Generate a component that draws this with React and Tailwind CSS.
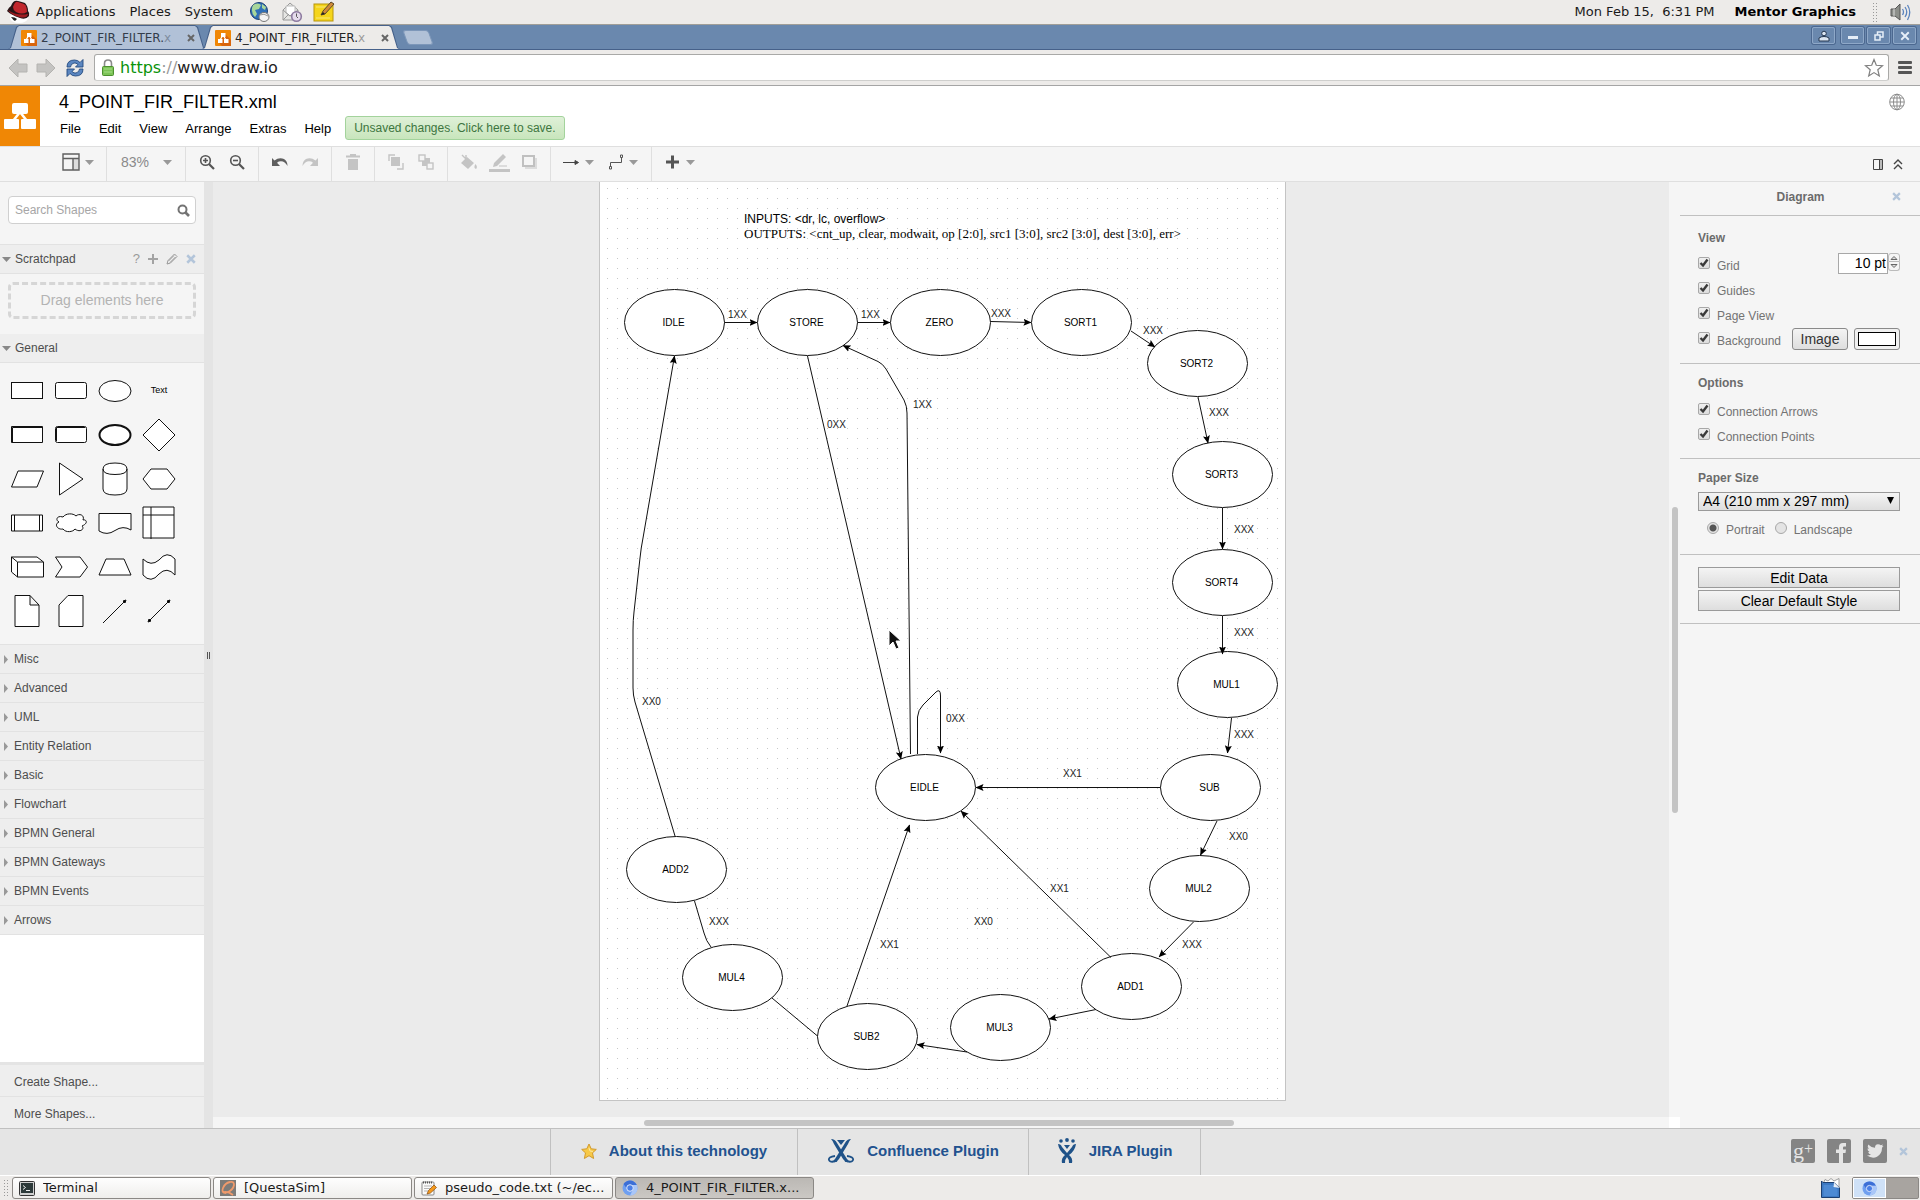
import React from "react";

const DEJAVU = "font-['DejaVu_Sans',sans-serif]";

/* ---------- desktop panel ---------- */

const HatIcon = () => (
  <svg width="24" height="24" viewBox="0 0 24 24">
    <ellipse cx="13" cy="17.500" rx="9" ry="5.500" fill="#fff" />
    <path d="M1 11Q3 7 5 6Q7 0 12 1Q16 2 19 3Q22 6 22 11Q24 13 23 16Q20 20 14 18Q5 15 1 11Z" fill="#2a1517" />
    <path d="M7 7Q9 1 12 2L18 4Q21 6 21 12Q16 15 10 12Q7 10 7 7Z" fill="#c1272d" />
    <path d="M2 10Q10 16 22 14Q21 19 13 17Q5 15 2 10Z" fill="#9e1c22" />
    <path d="M5 17Q9 17 11 19L9 21Q7 20 5 17Z" fill="#222" />
  </svg>
);

const GlobeMouseIcon = () => (
  <svg width="22" height="22" viewBox="0 0 22 22">
    <circle cx="10" cy="10" r="8.500" fill="#2f6fb8" stroke="#1b3f73" />
    <path d="M4 4Q9 1 12 4L10 8L6 9L8 13L6 16Q1 11 4 4Z" fill="#a8d69a" />
    <path d="M13 3L17 6L16 9L13 7Z" fill="#a8d69a" />
    <ellipse cx="15" cy="16" rx="5" ry="4.500" fill="#f4f4f4" stroke="#777" />
    <path d="M11 14Q15 12 19 15" stroke="#999" fill="none" />
  </svg>
);

const MailIcon = () => (
  <svg width="22" height="22" viewBox="0 0 22 22">
    <path d="M2 9L9 2L17 9V19H2Z" fill="#e6e6e4" stroke="#999" />
    <path d="M5 5H14V12L9 15L5 12Z" fill="#fff" stroke="#bbb" />
    <path d="M2 19L8 13M2 9L9 15L17 9" stroke="#999" fill="none" />
    <circle cx="15.500" cy="15.500" r="4.800" fill="#e5dcec" stroke="#8d7aa0" strokeWidth="1.600" />
    <path d="M15.500 12.500V15.500L17 17" stroke="#555" fill="none" />
  </svg>
);

const NoteIcon = () => (
  <svg width="22" height="22" viewBox="0 0 22 22">
    <rect x="1" y="3" width="19" height="17" fill="#f5d51c" stroke="#b8960c" />
    <path d="M3 6H17M3 17H17" stroke="#f9e878" />
    <path d="M8 14L10 10L18 1L21 3L12 13Z" fill="#d08a3a" stroke="#5d4a2a" />
    <path d="M8 14L10 11L12 13Z" fill="#222" />
  </svg>
);

const SpeakerIcon = () => (
  <svg width="22" height="22" viewBox="0 0 22 22" fill="none">
    <path d="M1 8H5L10 3V19L5 15H1Z" fill="#8d8f8a" stroke="#555" />
    <path d="M4 8V15" stroke="#ddd" />
    <path d="M12.500 8Q14.500 11 12.500 14M15 6Q18.500 11 15 16M17.500 4Q22 11 17.500 19" stroke="#5c84bd" strokeWidth="1.300" />
  </svg>
);

function DesktopPanel() {
  return (
    <header className={`${DEJAVU} flex h-[25px] shrink-0 items-center border-b border-[#a09e98] bg-[#edebe9] pl-[6px] pr-[8px] text-[13px] text-[#1a1a1a]`}>
      <HatIcon />
      <nav className="ml-[6px] flex items-center gap-[14px] pb-px">
        <button>Applications</button>
        <button>Places</button>
        <button>System</button>
      </nav>
      <div className="ml-[16px] flex items-center gap-[10px]">
        <button aria-label="Web browser"><GlobeMouseIcon /></button>
        <button aria-label="Mail"><MailIcon /></button>
        <button aria-label="Notes"><NoteIcon /></button>
      </div>
      <div className="ml-auto flex items-center gap-[20px] pb-px">
        <span className="whitespace-pre">Mon Feb 15,  6:31 PM</span>
        <b className="text-black">Mentor Graphics</b>
      </div>
      <span className="ml-[16px] mr-[12px] h-[20px] w-[6px] bg-[radial-gradient(#999_1px,transparent_1px)] bg-size-[3px_3px]" />
      <button aria-label="Volume"><SpeakerIcon /></button>
    </header>
  );
}

/* ---------- browser chrome ---------- */

const Favicon = () => (
  <svg width="16" height="16" viewBox="0 0 16 16" className="shrink-0">
    <rect width="16" height="16" rx="1" fill="#f08705" />
    <path d="M10 4L16 10V16H7L4 13Z" fill="#d9650c" />
    <path d="M8 5L5 10M8 5L11 10" stroke="#fff" strokeWidth="1.200" />
    <rect x="6" y="3" width="4.500" height="4" fill="#fff" />
    <rect x="3" y="9" width="4.500" height="4" fill="#fff" />
    <rect x="9" y="9" width="4.500" height="4" fill="#fff" />
  </svg>
);

const CrossIcon = ({ color, size = 8, width = 2 }) => (
  <svg width={size} height={size} viewBox="0 0 8 8" stroke={color} strokeWidth={width} className="shrink-0">
    <path d="M1 1L7 7M7 1L1 7" />
  </svg>
);

function Tab({ label, tail, active }) {
  return (
    <div className="-mr-[4px] h-[24px] w-[198px] bg-[#46618a] pt-px [clip-path:polygon(0_100%,2px_96%,8px_8%,11px_0,187px_0,190px_8%,196px_96%,100%_100%)]">
      <div
        className={
          (active ? "bg-[#edebe9] text-[#222]" : "bg-[#b1c1d7] text-[#333c4a]") +
          " flex h-full items-center pl-[13px] text-[12px] [clip-path:polygon(1px_100%,3px_96%,9px_8%,11px_0,187px_0,189px_8%,195px_96%,197px_100%)]"
        }
      >
        <Favicon />
        <span className="ml-[4px] whitespace-nowrap">
          {label}
          <span className="opacity-40">{tail}</span>
        </span>
        <button aria-label="Close tab" className="ml-auto mr-[11px]">
          <CrossIcon color="#666" />
        </button>
      </div>
    </div>
  );
}

function WindowButton({ label, children }) {
  return (
    <button
      aria-label={label}
      className="flex h-[17px] w-[23px] items-center justify-center rounded-[2px] border border-[#8ea8c8] shadow-[0_0_0_1px_#4c6890]"
    >
      {children}
    </button>
  );
}

function TabStrip() {
  return (
    <div className={`${DEJAVU} flex h-[25px] shrink-0 border-b border-[#46618a] bg-[#6a88ae] pl-[8px] pr-[4px]`}>
      <Tab label="2_POINT_FIR_FILTER." tail="x" />
      <Tab label="4_POINT_FIR_FILTER." tail="x" active />
      <button aria-label="New tab" className="ml-[9px] mt-[5px] h-[15px] w-[26px] skew-x-[20deg] rounded-[3px] border border-[#7d97b9] bg-[#b1c1d7]" />
      <div className="ml-auto flex gap-[3px] pt-[2px]">
        <div className="mr-[3px]">
          <WindowButton label="Profile">
            <svg width="12" height="12" viewBox="0 0 12 12" fill="#dce6f2" stroke="#24364f">
              <path d="M1 11V8Q3 6.500 6 6.500Q9 6.500 11 8V11Z" />
              <circle cx="6" cy="3.500" r="2.300" />
            </svg>
          </WindowButton>
        </div>
        <WindowButton label="Minimise">
          <span className="mt-[4px] h-[3px] w-[10px] bg-[#e6eef8]" />
        </WindowButton>
        <WindowButton label="Restore">
          <svg width="10" height="10" viewBox="0 0 10 10" fill="none" stroke="#e6eef8" strokeWidth="1.500">
            <path d="M3.500 1H9V6H3.500Z" />
            <path d="M1 4H6V9H1Z" fill="#6a88ae" />
          </svg>
        </WindowButton>
        <WindowButton label="Close">
          <CrossIcon color="#e6eef8" size={10} width={1.5} />
        </WindowButton>
      </div>
    </div>
  );
}

function NavArrow({ flip }) {
  return (
    <svg width="20" height="20" viewBox="0 0 20 20" className={flip ? "rotate-180" : ""}>
      <path d="M1 10L10 1V6H19V14H10V19Z" fill="#c4c3c1" stroke="#b4b3b0" />
    </svg>
  );
}

function AddressBar() {
  return (
    <div className={`${DEJAVU} flex h-[36px] shrink-0 items-center border-b border-[#a5a5a5] bg-[#edebe9] pl-[8px] pr-[8px]`}>
      <button aria-label="Back"><NavArrow /></button>
      <button aria-label="Forward" className="ml-[8px]"><NavArrow flip /></button>
      <button aria-label="Reload" className="ml-[9px]">
        <svg width="20" height="20" viewBox="0 0 20 20" fill="#5b86c0" stroke="#23497f" strokeWidth="0.900">
          <path d="M2 9Q2 2 9.500 2Q13 2 15 4.500L18 1.500V9H10.500L13 6.500Q11 4.500 9 5Q5.500 6 5.500 9Z" />
          <path d="M18 11Q18 18 10.500 18Q7 18 5 15.500L2 18.500V11H9.500L7 13.500Q9 15.500 11 15Q14.500 14 14.500 11Z" />
        </svg>
      </button>
      <div className="ml-[9px] flex h-[27px] flex-1 items-center rounded-[3px] border border-[#a9a9a7] border-b-[#cfcfcd] bg-white pl-[7px] pr-[4px] text-[16px]">
        <svg width="12" height="17" viewBox="0 0 12 17">
          <path d="M2.500 9V4.500Q2.500 1 6 1Q9.500 1 9.500 4.500V9" fill="none" stroke="#8a8a8a" strokeWidth="1.600" />
          <rect x="0.500" y="7.500" width="11" height="9" rx="1" fill="#7cc457" stroke="#4c8f2f" />
          <path d="M2 10H10M2 13H10" stroke="#a5dc88" />
        </svg>
        <span className="ml-[6px] text-[#0a930a]">https</span>
        <span className="text-[#999]">://</span>
        <input aria-label="Address" defaultValue="www.draw.io" className="h-full min-w-0 flex-1 text-[#222] outline-none" />
        <button aria-label="Bookmark this page">
          <svg width="20" height="20" viewBox="0 0 20 20" fill="#fff" stroke="#808080" strokeWidth="1.200">
            <path d="M10 1.500L12.300 7.300L18.500 7.700L13.800 11.700L15.300 18L10 14.600L4.700 18L6.200 11.700L1.500 7.700L7.700 7.300Z" />
          </svg>
        </button>
      </div>
      <button aria-label="Browser menu" className="ml-[9px] flex w-[14px] flex-col gap-[2px]">
        <span className="h-[3px] rounded-[1px] bg-[#555]" />
        <span className="h-[3px] rounded-[1px] bg-[#555]" />
        <span className="h-[3px] rounded-[1px] bg-[#555]" />
      </button>
    </div>
  );
}

/* ---------- application header ---------- */

function AppHeader() {
  return (
    <div className="flex h-[60px] shrink-0 bg-white">
      <div className="flex w-[40px] items-center justify-center bg-[#f08705]">
        <svg width="32" height="26" viewBox="0 0 32 26" fill="#fff">
          <path d="M16 9L9 18M16 9L23 18" stroke="#fff" strokeWidth="2.600" />
          <rect x="8" y="0" width="16" height="11" rx="2" />
          <rect x="0" y="16" width="15" height="10" rx="1" />
          <rect x="17" y="16" width="15" height="10" rx="1" />
        </svg>
      </div>
      <div className="flex flex-col pl-[19px]">
        <h1 className="mt-[4px] text-[18px] leading-[24px] text-black">4_POINT_FIR_FILTER.xml</h1>
        <div className="mt-[2px] flex items-center">
          <nav className="flex gap-[18px] pl-px pt-px text-[13px] text-black">
            <button>File</button>
            <button>Edit</button>
            <button>View</button>
            <button>Arrange</button>
            <button>Extras</button>
            <button>Help</button>
          </nav>
          <button className="ml-[14px] h-[24px] rounded-[3px] border border-[#a3d39c] bg-linear-to-b from-[#dff0d8] to-[#c8e5bc] px-[8px] text-[12px] text-[#3d7540]">
            Unsaved changes. Click here to save.
          </button>
        </div>
      </div>
      <button aria-label="Language" className="ml-auto mr-[15px] mt-[7px] h-[18px]">
        <svg width="16" height="18" viewBox="0 0 16 18" fill="none" stroke="#8c8c8c">
          <ellipse cx="8" cy="9" rx="7.300" ry="7.800" />
          <ellipse cx="8" cy="9" rx="3.500" ry="7.800" />
          <path d="M8 1V17M1 9H15M2 5H14M2 13H14" />
        </svg>
      </button>
    </div>
  );
}

/* ---------- toolbar ---------- */

const Caret = ({ color = "#999" }) => (
  <svg width="9" height="5" viewBox="0 0 9 5" fill={color}><path d="M0 0H9L4.500 5Z" /></svg>
);

function ToolGroup({ children, last }) {
  return (
    <div className={(last ? "" : "border-r border-[#dfdfdf]") + " flex items-center px-[6px] pb-[4px]"}>{children}</div>
  );
}

function ToolButton({ label, children, menu }) {
  return (
    <button
      aria-label={label}
      className={(menu ? "w-[44px] gap-[5px] pl-[6px]" : "w-[30px] justify-center") + " flex h-[30px] items-center"}
    >
      {children}
      {menu ? <Caret /> : null}
    </button>
  );
}

const Lens = ({ plus }) => (
  <svg width="16" height="16" viewBox="0 0 16 16" fill="none" stroke="#555" strokeWidth="1.600">
    <circle cx="6.500" cy="6.500" r="4.800" />
    <path d="M10 10L15 15" strokeWidth="2.200" />
    <path d={plus ? "M4 6.500H9M6.500 4V9" : "M4 6.500H9"} />
  </svg>
);

const TurnArrow = ({ color, flip }) => (
  <svg width="16" height="10" viewBox="0 0 16 10" className={flip ? "-scale-x-100" : ""}>
    <path d="M0 9V1L2.500 3.500Q7 0 12 2Q15.500 4 15.500 9Q13 4.500 9 4.300Q6.500 4.300 5 5.700L8 9Z" fill={color} />
  </svg>
);

function Toolbar() {
  const dim = "#c4c4c4";
  return (
    <div className="flex h-[36px] shrink-0 border-y border-[#dfdfdf] bg-[#f5f5f5] pl-[50px]">
      <ToolGroup>
        <ToolButton label="View" menu>
          <svg width="18" height="18" viewBox="0 0 18 18" fill="none" stroke="#5f5f5f" strokeWidth="1.400">
            <rect x="11" y="5.500" width="6" height="11" fill="#ddd" stroke="none" />
            <path d="M1 1H17V17H1ZM1 5.500H17M11 5.500V17" />
          </svg>
        </ToolButton>
      </ToolGroup>
      <ToolGroup>
        <button className="flex h-[30px] w-[66px] items-center justify-between pl-[8px] pr-[7px] text-[14px] text-[#8a8a8a]">
          83%
          <Caret />
        </button>
      </ToolGroup>
      <ToolGroup>
        <ToolButton label="Zoom in"><Lens plus /></ToolButton>
        <ToolButton label="Zoom out"><Lens /></ToolButton>
      </ToolGroup>
      <ToolGroup>
        <ToolButton label="Undo"><TurnArrow color="#5f5f5f" /></ToolButton>
        <ToolButton label="Redo"><TurnArrow color={dim} flip /></ToolButton>
      </ToolGroup>
      <ToolGroup>
        <ToolButton label="Delete">
          <svg width="14" height="16" viewBox="0 0 14 16" fill={dim}><path d="M0 1.500H4V0H10V1.500H14V3.500H0ZM2 5H12V16H2Z" /></svg>
        </ToolButton>
      </ToolGroup>
      <ToolGroup>
        <ToolButton label="To front">
          <svg width="16" height="16" viewBox="0 0 16 16" fill="none" stroke={dim}>
            <path d="M7 1H1V7M9 15H15V9" strokeWidth="1.400" />
            <rect x="3.500" y="3.500" width="8" height="8" fill={dim} />
          </svg>
        </ToolButton>
        <ToolButton label="To back">
          <svg width="16" height="16" viewBox="0 0 16 16" fill={dim} stroke={dim}>
            <rect x="4.500" y="4.500" width="7" height="7" />
            <rect x="1" y="1" width="6" height="6" fill="#f5f5f5" strokeWidth="1.400" />
            <rect x="9" y="9" width="6" height="6" fill="#f5f5f5" strokeWidth="1.400" />
          </svg>
        </ToolButton>
      </ToolGroup>
      <ToolGroup>
        <ToolButton label="Fill colour">
          <svg width="18" height="16" viewBox="0 0 18 16" fill={dim}>
            <path d="M7 3L14 9L8 15L1 9ZM15.500 10Q18 13 16 15Q13 14 15.500 10Z" />
            <path d="M2 1L7 6M6 4V1" stroke={dim} strokeWidth="1.400" />
          </svg>
        </ToolButton>
        <ToolButton label="Line colour">
          <svg width="21" height="19" viewBox="0 0 21 19" fill={dim}>
            <path d="M4 14L5 10L14 1L17 4L8 13ZM0 16H21V19H0ZM10 12.500H18V13.500H10Z" />
          </svg>
        </ToolButton>
        <ToolButton label="Shadow">
          <svg width="15" height="14" viewBox="0 0 15 14">
            <rect x="3" y="3" width="12" height="11" fill="#dcdcdc" />
            <rect x="1" y="1" width="11" height="10" fill="#f5f5f5" stroke="#c0c0c0" strokeWidth="2" />
          </svg>
        </ToolButton>
      </ToolGroup>
      <ToolGroup>
        <ToolButton label="Connection" menu>
          <svg width="17" height="16" viewBox="0 0 17 16" stroke="#444" fill="#444"><path d="M0 8.500H12" /><path d="M12 6.500L15.500 8.500L12 10.500Z" /></svg>
        </ToolButton>
        <ToolButton label="Waypoints" menu>
          <svg width="17" height="16" viewBox="0 0 17 16" fill="none" stroke="#555"><path d="M3.500 12V8.500H14.500V4M2.500 12.500H4.500V15H2.500ZM13.500 1H15.500V3.500H13.500Z" /></svg>
        </ToolButton>
      </ToolGroup>
      <ToolGroup last>
        <ToolButton label="Insert" menu>
          <svg width="17" height="14" viewBox="0 0 17 14" stroke="#555" strokeWidth="3"><path d="M2 7H15M8.500 0.500V13.500" /></svg>
        </ToolButton>
      </ToolGroup>
      <div className="ml-auto mr-[17px] flex items-center gap-[10px]">
        <button aria-label="Format panel">
          <svg width="10" height="11" viewBox="0 0 10 11" fill="none" stroke="#444"><rect x="7" y="1" width="2.500" height="9" fill="#bbb" stroke="none" /><path d="M0.500 0.500H9.500V10.500H0.500ZM6.500 0.500V10.500" /></svg>
        </button>
        <button aria-label="Collapse header">
          <svg width="10" height="11" viewBox="0 0 10 11" fill="none" stroke="#444" strokeWidth="1.400"><path d="M1 5L5 1L9 5M1 10L5 6L9 10" /></svg>
        </button>
      </div>
    </div>
  );
}

/* ---------- shapes sidebar ---------- */

const shapes = [
  ["Rectangle", <rect x="2.500" y="9.500" width="31" height="16" />],
  ["Rounded rectangle", <rect x="2.500" y="9.500" width="31" height="16" rx="2" />],
  ["Ellipse", <ellipse cx="18" cy="18" rx="16" ry="10.500" />],
  ["Text", null],
  ["Thick rectangle", <path d="M2.500 9.500H33.500V25.500H2.500ZM3.500 25V10.500H33" />],
  ["Thick rounded rectangle", <g><rect x="2.500" y="9.500" width="31" height="16" rx="2" /><path d="M3.500 24V10.500H32" /></g>],
  ["Thick ellipse", <ellipse cx="18" cy="18" rx="15.500" ry="10" strokeWidth="2" />],
  ["Diamond", <path d="M18 2L34 18L18 34L2 18Z" />],
  ["Parallelogram", <path d="M9 10H34.500L28 26H2.500Z" />],
  ["Triangle", <path d="M6.500 2L30 18L6.500 34Z" />],
  ["Cylinder", <path d="M6 8V28Q6 34 18 34Q30 34 30 28V8Q30 2 18 2Q6 2 6 8Q6 13.500 18 13.500Q30 13.500 30 8" />],
  ["Hexagon", <path d="M10 8H26L34 18L26 28H10L2 18Z" />],
  ["Process", <path d="M2.500 10H33.500V26H2.500ZM5.500 10V26M30.500 10V26" />],
  ["Cloud", <path d="M10 12C4 10 2 15 6 17C1 19 4 25 10 24C13 28 20 27 22 24C27 28 32 24 29 21C36 18 33 14 30 15C32 10 26 8 23 11C20 8 13 8 10 12Z" />],
  ["Document", <path d="M2 8.500H34V25Q26 20 18 25.500Q10 31 2 26Z" />],
  ["Internal storage", <path d="M2 2H33V33H2ZM10 2V34M2 10H33" />],
  ["Cube", <path d="M2.500 8H28L34.500 13V28H8.500L2.500 23ZM2.500 8L8.500 13V28M8.500 13H34.500" />],
  ["Step", <path d="M2.500 8H27L34.500 18L27 28H2.500L9 18Z" />],
  ["Trapezoid", <path d="M9 10H27L34 26H2Z" />],
  ["Tape", <path d="M2 10Q10 18 18 11Q26 1 34 10V26Q26 17 18 25Q10 35 2 26Z" />],
  ["Note", <path d="M6 2.500H21L30 12V33.500H6ZM21 2.500V12H30" />],
  ["Card", <path d="M15 2.500H30V33.500H6V12Z" />],
  ["Directional connector", <g><path d="M6 30L28 8" /><path d="M29 7L28 10L26 8Z" fill="#000" /></g>],
  ["Bidirectional connector", <g><path d="M8 28L28 8" /><path d="M29 7L28 10L26 8ZM7 29L8 26L10 28Z" fill="#000" /></g>],
];

const sections = ["Misc", "Advanced", "UML", "Entity Relation", "Basic", "Flowchart", "BPMN General", "BPMN Gateways", "BPMN Events", "Arrows"];

function Sidebar() {
  return (
    <aside className="flex w-[204px] shrink-0 flex-col bg-white text-[12px] text-[#4d4d4d]">
      <div className="bg-[#f5f5f5] px-[8px] pb-[20px] pt-[14px]">
        <div className="flex h-[28px] items-center rounded-[4px] border border-[#d0d0d0] bg-white pl-[6px] pr-[5px]">
          <input aria-label="Search shapes" placeholder="Search Shapes" className="h-full min-w-0 flex-1 outline-none placeholder:text-[#a6a6a6]" />
          <button aria-label="Search">
            <svg width="13" height="13" viewBox="0 0 13 13" fill="none" stroke="#737373" strokeWidth="2">
              <circle cx="5.500" cy="5.500" r="4" />
              <path d="M8.500 8.500L12 12" strokeWidth="2.600" />
            </svg>
          </button>
        </div>
      </div>
      <div className="flex h-[30px] items-center border-y border-[#e2e2e2] bg-[#eee] pl-[2px] pr-[8px]">
        <button className="flex items-center gap-[4px]"><Caret color="#888" />Scratchpad</button>
        <div className="ml-auto flex items-center gap-[8px] pb-px text-[#9a9a9a]">
          <button aria-label="Help" className="text-[13px]">?</button>
          <button aria-label="Add">
            <svg width="10" height="10" viewBox="0 0 10 10" stroke="#a3a3a3" strokeWidth="2"><path d="M0 5H10M5 0V10" /></svg>
          </button>
          <button aria-label="Edit">
            <svg width="12" height="12" viewBox="0 0 12 12" fill="none" stroke="#999"><path d="M1 11L2 7.500L8.500 1L11 3.500L4.500 10ZM2.500 8L8 2.500M4 9.500L9.500 4" /></svg>
          </button>
          <button aria-label="Close scratchpad"><CrossIcon color="#b3c5da" size={10} /></button>
        </div>
      </div>
      <div className="bg-[#f5f5f5] px-[8px] pb-[15px] pt-[8px]">
        <div className="flex h-[37px] items-center justify-center rounded-[5px] border-[3px] border-dashed border-[#d6d6d6] text-[14px] text-[#b3b3b3]">
          Drag elements here
        </div>
      </div>
      <button className="flex h-[29px] shrink-0 items-center gap-[4px] border-b border-[#e2e2e2] bg-[#eee] pl-[2px]">
        <Caret color="#888" />General
      </button>
      <div className="grid grid-cols-[repeat(4,44px)] bg-[#f5f5f5] pb-[11px] pl-[5px] pt-[6px]">
        {shapes.map(([name, art]) => (
          <button key={name} aria-label={name} className="flex h-[44px] items-center justify-center text-[9px] text-black">
            {art ? (
              <svg width="36" height="36" viewBox="0 0 36 36" fill="#fff" stroke="#111">{art}</svg>
            ) : (
              "Text"
            )}
          </button>
        ))}
      </div>
      <div className="border-t border-[#e2e2e2]">
        {sections.map((s) => (
          <button key={s} className="flex h-[29px] w-full items-center gap-[6px] border-b border-[#e2e2e2] bg-[#eee] pl-[4px]">
            <svg width="4" height="9" viewBox="0 0 4 9" fill="#999"><path d="M0 0L4 4.500L0 9Z" /></svg>
            {s}
          </button>
        ))}
      </div>
      <div className="mt-auto border-t-[3px] border-[#e4e4e4]">
        <button className="flex h-[32px] w-full items-center border-b border-[#e2e2e2] bg-[#eee] pl-[14px] pt-[2px]">Create Shape...</button>
        <button className="flex h-[31px] w-full items-center bg-[#eee] pl-[14px] pt-[2px]">More Shapes...</button>
      </div>
    </aside>
  );
}

/* ---------- diagram ---------- */

const nodes = [
  ["IDLE", 674.5, 322.5], ["STORE", 807.5, 322.5], ["ZERO", 940.5, 322.5], ["SORT1", 1081.5, 322.5],
  ["SORT2", 1197.5, 363.5], ["SORT3", 1222.5, 474.5], ["SORT4", 1222.5, 582.5], ["MUL1", 1227.5, 684.5],
  ["SUB", 1210.5, 787.5], ["MUL2", 1199.5, 888.5], ["ADD1", 1131.5, 986.5], ["MUL3", 1000.5, 1027.5],
  ["EIDLE", 925.5, 787.5], ["ADD2", 676.5, 869.5], ["MUL4", 732.5, 977.5], ["SUB2", 867.5, 1036.5],
];

const arrows = [
  "M724.500 322.500H757", "M857.500 322.500H890", "M990.500 321.500L1031 322.500", "M1131 331L1155 347",
  "M1198 397L1208 443", "M1222.500 508V549", "M1222.500 616V654", "M1231.500 718L1227.500 753",
  "M1217 821L1200.500 855", "M1193.500 922L1159 957", "M1096 1009.500L1049 1019", "M967 1052L917 1044.500",
  "M1160.500 787.500H976", "M1111 957.500L961 811", "M847 1006L909.500 825", "M807.500 356L901 759",
  "M910.500 754L907 413Q907 406 904 400L886 369Q883 364 878 361.500L843 345.500",
  "M917.500 754V717Q918 710 923 705L936 692Q940.500 688 940.500 696V753",
  "M675 836L635 702Q633 695 633 688V630Q633 620 634 612L640 558Q641 548 643 538L674.500 356",
];

const lines = ["M817.500 1036L772 998", "M694.500 901L704 933Q706 941 711 947"];

const labels = [
  ["1XX", 728, 314], ["1XX", 861, 314], ["XXX", 991, 313], ["XXX", 1143, 330], ["XXX", 1209, 412],
  ["XXX", 1234, 529], ["XXX", 1234, 632], ["XXX", 1234, 734], ["XX1", 1063, 773], ["XX0", 1229, 836],
  ["XX1", 1050, 888], ["XX0", 974, 921], ["XXX", 1182, 944], ["0XX", 946, 718], ["1XX", 913, 404],
  ["0XX", 827, 424], ["XX0", 642, 701], ["XXX", 709, 921], ["XX1", 880, 944],
];

function Diagram() {
  return (
    <svg viewBox="600 182 685 918" className="block h-[918px] w-[685px]" role="img" aria-label="State diagram">
      <defs>
        <marker id="head" markerUnits="userSpaceOnUse" markerWidth="8" markerHeight="8" refX="7.500" refY="4" orient="auto">
          <path d="M0 0.500L8 4L0 7.500L1.500 4Z" />
        </marker>
        <pattern id="dots" x="607" y="188" width="10" height="10" patternUnits="userSpaceOnUse">
          <rect width="1" height="1" fill="#c6c6c6" />
        </pattern>
      </defs>
      <rect x="600" y="182" width="685" height="918" fill="url(#dots)" />
      <text x="744" y="223" fontSize="12">INPUTS: &lt;dr, lc, overflow&gt;</text>
      <text x="744" y="238" fontSize="13" fontFamily="Liberation Serif, serif">
        OUTPUTS: &lt;cnt_up, clear, modwait, op [2:0], src1 [3:0], src2 [3:0], dest [3:0], err&gt;
      </text>
      <g fill="#fff" stroke="#111">
        {nodes.map(([n, x, y]) => <ellipse key={n} cx={x} cy={y} rx="50" ry="33" />)}
      </g>
      <g fill="none" stroke="#111">
        {arrows.map((d) => <path key={d} d={d} markerEnd="url(#head)" />)}
        {lines.map((d) => <path key={d} d={d} />)}
      </g>
      <g fontSize="10" textAnchor="middle">
        {nodes.map(([n, x, y]) => <text key={n} x={x - 1} y={y + 3}>{n}</text>)}
      </g>
      <g fontSize="10" fill="#222">
        {labels.map(([t, x, y]) => <text key={x + "-" + y} x={x} y={y + 4}>{t}</text>)}
      </g>
      <path d="M889 630V646L893 642L896 649L899 648L896 641H901Z" fill="#111" stroke="#fff" />
    </svg>
  );
}

function Canvas() {
  return (
    <main className="flex min-w-0 flex-1 flex-col">
      <div className="flex min-h-0 flex-1">
        <div className="flex min-w-0 flex-1 items-start justify-center overflow-hidden bg-[#ebebeb] pl-[3px]">
          <div className="border border-t-0 border-[#c4c4c4] bg-white">
            <Diagram />
          </div>
        </div>
        <div className="flex w-[11px] flex-col items-center bg-[#f5f5f5]">
          <div className="mt-[325px] h-[306px] w-[6px] rounded-full bg-[#c4c4c4]" />
        </div>
      </div>
      <div className="flex h-[11px] shrink-0 items-center">
        <div className="flex h-full min-w-0 flex-1 items-center bg-[#f5f5f5]">
          <div className="ml-[431px] h-[6px] w-[590px] rounded-full bg-[#c4c4c4]" />
        </div>
        <div className="h-full w-[11px] bg-white" />
      </div>
    </main>
  );
}

/* ---------- format panel ---------- */

function Check({ label }) {
  return (
    <label className="flex h-[25px] items-center">
      <span className="relative mb-[6px] h-[12px] w-[12px]">
        <input type="checkbox" defaultChecked className="peer block h-[12px] w-[12px] appearance-none rounded-[2px] border border-[#a8a8a8] bg-linear-to-b from-[#f0f0f0] to-[#dcdcdc]" />
        <svg width="10" height="10" viewBox="0 0 10 10" fill="none" stroke="#3a3a3a" strokeWidth="2.400" className="pointer-events-none absolute left-px top-px hidden peer-checked:block">
          <path d="M1.500 5L4 7.500L8.500 1.500" />
        </svg>
      </span>
      <span className="ml-[7px]">{label}</span>
    </label>
  );
}

function Radio({ label, checked }) {
  return (
    <label className="flex items-center">
      <input
        type="radio"
        name="orientation"
        defaultChecked={checked}
        className="mb-[5px] h-[12px] w-[12px] appearance-none rounded-full border border-[#a8a8a8] bg-[#e4e4e4] checked:bg-[radial-gradient(#555_3px,#e4e4e4_4px)]"
      />
      <span className="ml-[7px]">{label}</span>
    </label>
  );
}

const Heading = ({ children }) => <h2 className="text-[12px] font-bold leading-[16px] text-[#6b6b6b]">{children}</h2>;

const wideButton = "h-[21px] w-full border border-[#9a9a9a] bg-linear-to-b from-[#f4f4f4] to-[#dedede] text-[14px] leading-[18px] text-black";

function FormatPanel() {
  return (
    <aside className="w-[240px] shrink-0 bg-[#f5f5f5] text-[12px] text-[#737373]">
      <div className="flex h-[34px] items-center border-b border-[#c0c0c0] pb-[4px] pr-[19px]">
        <div className="flex-1 pl-[29px] text-center"><Heading>Diagram</Heading></div>
        <button aria-label="Close panel"><CrossIcon color="#b3c5da" size={9} /></button>
      </div>
      <section className="border-b border-[#c0c0c0] pb-[10px] pl-[18px] pr-[20px] pt-[14px]">
        <Heading>View</Heading>
        <div className="mt-[7px] flex justify-between">
          <Check label="Grid" />
          <div className="flex items-start">
            <input aria-label="Grid size" defaultValue="10 pt" className="h-[21px] w-[50px] border border-[#a8a8a8] bg-white pr-px text-right text-[14px] text-black" />
            <div className="flex w-[12px] flex-col">
              <button aria-label="Increase" className="flex h-[9px] items-center justify-center rounded-t-[3px] border border-[#bbb]"><svg width="8" height="4" viewBox="0 0 8 4" fill="#ddd" stroke="#666"><path d="M1 3.500L4 0.500L7 3.500Z" /></svg></button>
              <button aria-label="Decrease" className="flex h-[9px] items-center justify-center rounded-b-[3px] border border-t-0 border-[#bbb]"><svg width="8" height="4" viewBox="0 0 8 4" fill="#ddd" stroke="#666"><path d="M1 0.500L4 3.500L7 0.500Z" /></svg></button>
            </div>
          </div>
        </div>
        <Check label="Guides" />
        <Check label="Page View" />
        <div className="flex items-center">
          <Check label="Background" />
          <button className="mb-[3px] ml-auto h-[22px] w-[56px] rounded-[3px] border border-[#8a8a8a] bg-linear-to-b from-[#f4f4f4] to-[#dedede] text-[14px] leading-[18px] text-[#333]">Image</button>
          <button aria-label="Background colour" className="mb-[3px] ml-[6px] flex h-[22px] w-[46px] items-center justify-center rounded-[3px] border border-[#8a8a8a] bg-[#f0f0f0]">
            <span className="h-[14px] w-[38px] border border-black bg-white" />
          </button>
        </div>
      </section>
      <section className="border-b border-[#c0c0c0] pb-[9px] pl-[18px] pt-[11px]">
        <Heading>Options</Heading>
        <div className="mt-[8px]"><Check label="Connection Arrows" /></div>
        <Check label="Connection Points" />
      </section>
      <section className="border-b border-[#c0c0c0] pb-[15px] pl-[18px] pr-[20px] pt-[11px]">
        <Heading>Paper Size</Heading>
        <div className="relative mt-[6px]">
          <select aria-label="Paper size" className="block h-[19px] w-full appearance-none border border-[#9a9a9a] bg-linear-to-b from-[#f4f4f4] to-[#dedede] pl-[4px] text-[14px] leading-[17px] text-black">
            <option>A4 (210 mm x 297 mm)</option>
          </select>
          <svg width="7" height="7" viewBox="0 0 7 7" className="pointer-events-none absolute right-[6px] top-[5px]"><path d="M0 0H7L3.500 7Z" /></svg>
        </div>
        <div className="mt-[10px] flex h-[18px] items-center gap-[10px] pl-[9px]">
          <Radio label="Portrait" checked />
          <Radio label="Landscape" />
        </div>
      </section>
      <section className="flex flex-col gap-[2px] border-b border-[#c0c0c0] pb-[12px] pl-[18px] pr-[20px] pt-[12px]">
        <button className={wideButton}>Edit Data</button>
        <button className={wideButton}>Clear Default Style</button>
      </section>
    </aside>
  );
}

/* ---------- footer ---------- */

function FooterLink({ icon, children, width }) {
  return (
    <a href="#" className={`${width} flex items-center justify-center gap-[12px] border-r border-[#c0c0c0] pb-[2px] text-[15px] font-bold text-[#22528f]`}>
      {icon}
      {children}
    </a>
  );
}

const ConfluenceIcon = () => (
  <svg width="28" height="26" viewBox="0 0 28 26" fill="#1f5288">
    <path d="M4 1Q8 1 10 5L20 21Q21 23 24 23Q19 26 16 21L7 6Q6 3 4 1Z" />
    <path d="M24 1Q20 1 18 5L8 21Q7 23 4 23Q9 26 12 21L21 6Q22 3 24 1Z" />
    <path d="M10 2H18L14 7Z" />
    <path d="M8 18Q1 19 2 22Q3 25 10 23M20 18Q27 19 26 22Q25 25 18 23" fill="none" stroke="#1f5288" strokeWidth="1.800" />
  </svg>
);

const JiraIcon = () => (
  <svg width="20" height="26" viewBox="0 0 20 26" fill="#1f5288">
    <circle cx="4" cy="3" r="1.800" />
    <circle cx="10" cy="2" r="1.900" />
    <circle cx="16" cy="3" r="1.800" />
    <path d="M1 6Q4 6 5 9L10 15L15 9Q16 6 19 6Q18 13 12 17Q16 20 15 25H12Q12 21 10 19Q8 21 8 25H5Q4 20 8 17Q2 13 1 6Z" />
    <path d="M7 7H13L10 11Z" />
  </svg>
);

function Social({ label, children }) {
  return (
    <a href="#" aria-label={label} className="h-[24px] w-[24px] rounded-[2px] bg-[#848484]">
      {children}
    </a>
  );
}

function Footer() {
  return (
    <footer className="flex h-[47px] shrink-0 border-t border-[#c0c0c0] bg-[#e5e5e5]">
      <div className="min-w-0 flex-1" />
      <div className="flex border-l border-[#c0c0c0]">
        <FooterLink
          width="w-[247px]"
          icon={
            <svg width="16" height="17" viewBox="0 0 16 17" fill="#f7c948" stroke="#d29a2e">
              <path d="M8 1L10.200 5.800L15.300 6.400L11.500 9.900L12.600 15.500L8 12.700L3.400 15.500L4.500 9.900L0.700 6.400L5.800 5.800Z" />
              <path d="M8 5L9 8L12 8.500" stroke="#fbe7a1" fill="none" />
            </svg>
          }
        >
          About this technology
        </FooterLink>
        <FooterLink width="w-[231px]" icon={<ConfluenceIcon />}>Confluence Plugin</FooterLink>
        <FooterLink width="w-[172px]" icon={<JiraIcon />}>JIRA Plugin</FooterLink>
      </div>
      <div className="min-w-0 flex-1" />
      <div className="flex w-[169px] shrink-0 items-center justify-end gap-[12px] pb-[2px] pr-[12px]">
        <Social label="Google Plus">
          <span className="flex h-full items-center justify-center font-['Liberation_Serif',serif] leading-[22px] text-[#e5e5e5]">
            <span className="text-[22px]">g</span>
            <span className="pb-[4px] text-[16px]">+</span>
          </span>
        </Social>
        <Social label="Facebook">
          <svg width="24" height="24" viewBox="0 0 24 24" fill="#e5e5e5"><path d="M12 24V14H9V10.500H12V8Q12 4 16 4H19V7.500H17Q16 7.500 16 8.800V10.500H19L18.500 14H16V24Z" /></svg>
        </Social>
        <Social label="Twitter">
          <svg width="24" height="24" viewBox="0 0 24 24" fill="#e5e5e5"><path d="M4 16.500Q6.500 16.500 8 15.500Q5.500 15 5.200 13H6.500Q4.300 11.500 4.500 9.500L6 9.800Q4 7.500 5.200 5.500Q8 8.500 12 8.800Q11.800 5.500 15 5.200Q16.800 5.200 17.800 6.300L20 5.500L19 7.300L20.500 7L19 8.800Q19 15 14 17.800Q9 20 4 16.500Z" /></svg>
        </Social>
        <button aria-label="Dismiss footer"><CrossIcon color="#b3c5da" size={9} /></button>
      </div>
    </footer>
  );
}

/* ---------- task bar ---------- */

const ChromiumIcon = ({ size = 15 }) => (
  <svg width={size} height={size} viewBox="0 0 16 16" className="shrink-0">
    <circle cx="8" cy="8" r="7.500" fill="#6f9ff0" />
    <path d="M1.500 4Q4 0.500 8 0.500Q12.500 0.500 14.800 5H8Q5 5 4.800 8.500Z" fill="#3d6fd6" />
    <path d="M14.800 5Q17 11 12 14.500Q10 15.500 8 15.500L11 9.500Q12 7 10 5Z" fill="#a9c6f8" />
    <circle cx="8" cy="8" r="3.300" fill="#4b7fe6" stroke="#dfe9fb" />
  </svg>
);

function TaskButton({ icon, children, active }) {
  return (
    <button
      className={
        (active ? "bg-linear-to-b from-[#bbb8b4] to-[#cbc8c4]" : "bg-linear-to-b from-[#fefefe] to-[#efeeec]") +
        " flex h-[22px] w-[199px] items-center gap-[8px] rounded-[3px] border border-[#8b8885] pl-[6px] text-[13px] text-[#1a1a1a]"
      }
    >
      {icon}
      <span className="truncate">{children}</span>
    </button>
  );
}

function Taskbar() {
  return (
    <div className={`${DEJAVU} flex h-[25px] shrink-0 items-center border-t border-white bg-[#edebe9] pr-px`}>
      <span className="ml-[3px] mr-[3px] h-[18px] w-[6px] bg-[radial-gradient(#999_1px,transparent_1px)] bg-size-[3px_3px]" />
      <div className="flex gap-[2px]">
        <TaskButton
          icon={
            <svg width="16" height="15" viewBox="0 0 16 15" className="shrink-0">
              <rect x="0.500" y="0.500" width="15" height="14" rx="1" fill="#d0d0d0" stroke="#333" />
              <rect x="2" y="2" width="12" height="10" fill="#2d3a3a" />
              <path d="M4 4.500L6.500 6.500L4 8.500M7 9.500H11" stroke="#eee" fill="none" />
            </svg>
          }
        >
          Terminal
        </TaskButton>
        <TaskButton
          icon={
            <svg width="16" height="16" viewBox="0 0 16 16" className="shrink-0">
              <rect width="16" height="16" fill="#7d7b78" />
              <path d="M6 13Q1 13 3 8Q5 3 10 2Q14 1 14 5Q13 10 8 12Q6 13 4 12Q8 11 13 15" fill="none" stroke="#f09a6b" strokeWidth="1.800" />
            </svg>
          }
        >
          [QuestaSim]
        </TaskButton>
        <TaskButton
          icon={
            <svg width="16" height="16" viewBox="0 0 16 16" className="shrink-0">
              <rect x="1" y="2" width="12" height="13" rx="1" fill="#fafafa" stroke="#888" />
              <path d="M2 2.500H12" stroke="#555" strokeWidth="2" strokeDasharray="1 1" />
              <path d="M3 6H11M3 8.500H10M3 11H8" stroke="#b5b5b5" />
              <path d="M6 14L7.500 10.500L13 5L15.500 7.500L9.500 13Z" fill="#f59a1d" stroke="#8a4b0a" strokeWidth="0.700" />
            </svg>
          }
        >
          pseudo_code.txt (~/ec...
        </TaskButton>
        <TaskButton active icon={<ChromiumIcon size={16} />}>4_POINT_FIR_FILTER.x...</TaskButton>
      </div>
      <button aria-label="Wastebasket" className="ml-auto">
        <svg width="21" height="21" viewBox="0 0 21 21">
          <path d="M3 6L5 1.500L8 3L11 0.500L14 3L19 0.500V12Z" fill="#fff" stroke="#888" strokeWidth="0.800" />
          <path d="M1.500 3L3 4.500H14L19.500 10V19.500H1.500Z" fill="#3d79c2" stroke="#1c3f70" />
          <path d="M3.500 7H13L17.500 11.500V18H3.500Z" fill="#4d8ad3" />
          <path d="M14 4.500L13.500 9L19.500 10Z" fill="#e6eef8" />
        </svg>
      </button>
      <div className="ml-[11px] flex h-[22px] w-[67px] overflow-hidden rounded-[2px] border border-[#8b8885] bg-[#a8a4a0]">
        <button aria-label="Workspace 1" className="flex w-[33px] items-center justify-center border border-white bg-[#cfe1f7]"><ChromiumIcon /></button>
        <button aria-label="Workspace 2" className="flex-1" />
      </div>
    </div>
  );
}

export default function App() {
  return (
    <div className="flex min-h-screen flex-col bg-white font-['Liberation_Sans',Arial,sans-serif]">
      <DesktopPanel />
      <TabStrip />
      <AddressBar />
      <AppHeader />
      <Toolbar />
      <div className="flex flex-1">
        <Sidebar />
        <div className="flex w-[9px] shrink-0 justify-center bg-[#e4e4e4]">
          <div className="mt-[470px] h-[7px] w-[3px] border-x border-[#555]" />
        </div>
        <Canvas />
        <FormatPanel />
      </div>
      <Footer />
      <Taskbar />
    </div>
  );
}
